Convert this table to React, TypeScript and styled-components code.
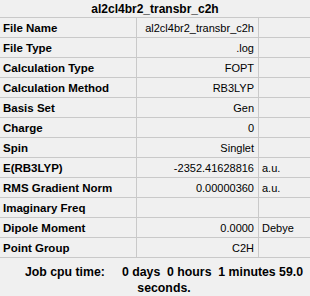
import React from 'react';
import styled, { createGlobalStyle } from 'styled-components';

const GlobalStyle = createGlobalStyle`
    html, body {
        margin: 0;
        padding: 0;
        background: #f0f0f0;
    }
    body {
        font-family: "Liberation Sans", Arial, sans-serif;
        color: #000;
    }
`;

const Panel = styled.div`
    width: 310px;
    height: 296px;
    box-sizing: border-box;
    background: #f0f0f0;
    display: flex;
    flex-direction: column;
`;

const Title = styled.div`
    height: 17px;
    display: flex;
    justify-content: center;
    align-items: center;
    font-size: 12px;
    font-weight: bold;
`;

const Table = styled.div`
    display: grid;
    grid-template-columns: 137px 122px 1fr;
    border-top: 1px solid #c9c9c9;
`;

const Cell = styled.div<{ $align?: 'left' | 'right'; $bold?: boolean; $last?: boolean }>`
    height: 19px;
    display: flex;
    align-items: center;
    justify-content: ${p => (p.$align === 'right' ? 'flex-end' : 'flex-start')};
    padding: 0 4px 0 3px;
    border-bottom: 1px solid #c9c9c9;
    border-right: ${p => (p.$last ? 'none' : '1px solid #c9c9c9')};
    font-size: ${p => (p.$bold ? '11.5px' : '11px')};
    font-weight: ${p => (p.$bold ? 'bold' : 'normal')};
    white-space: nowrap;
    overflow: hidden;
`;

const CpuTime = styled.div`
    padding: 6px 0 0 18px;
    text-align: center;
    font-size: 12.3px;
    font-weight: bold;
    line-height: 16px;
    white-space: pre-wrap;
`;

type Row = {
    label: string;
    value: string;
    unit?: string;
};

const rows: Row[] = [
    { label: 'File Name', value: 'al2cl4br2_transbr_c2h' },
    { label: 'File Type', value: '.log' },
    { label: 'Calculation Type', value: 'FOPT' },
    { label: 'Calculation Method', value: 'RB3LYP' },
    { label: 'Basis Set', value: 'Gen' },
    { label: 'Charge', value: '0' },
    { label: 'Spin', value: 'Singlet' },
    { label: 'E(RB3LYP)', value: '-2352.41628816', unit: 'a.u.' },
    { label: 'RMS Gradient Norm', value: '0.00000360', unit: 'a.u.' },
    { label: 'Imaginary Freq', value: '' },
    { label: 'Dipole Moment', value: '0.0000', unit: 'Debye' },
    { label: 'Point Group', value: 'C2H' },
];

const App = () => {
    return (
        <>
            <GlobalStyle />
            <Panel>
                <Title>al2cl4br2_transbr_c2h</Title>
                <Table>
                    {rows.map(row => (
                        <React.Fragment key={row.label}>
                            <Cell $bold>{row.label}</Cell>
                            <Cell $align="right">{row.value}</Cell>
                            <Cell $last>{row.unit ?? ''}</Cell>
                        </React.Fragment>
                    ))}
                </Table>
                <CpuTime>{'Job cpu time:     0 days  0 hours  1 minutes 59.0 seconds.'}</CpuTime>
            </Panel>
        </>
    );
};

export default App;
